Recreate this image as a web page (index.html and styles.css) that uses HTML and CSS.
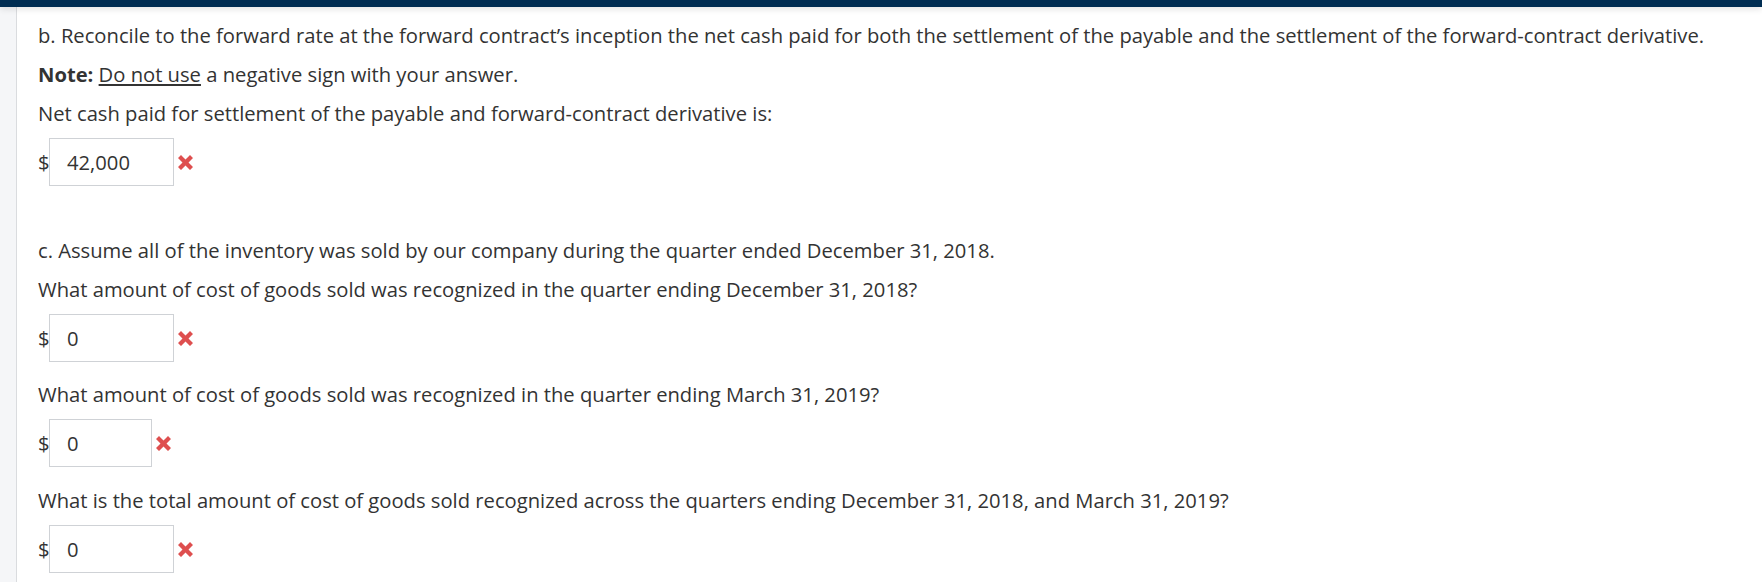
FILE: index.html
```html
<!DOCTYPE html>
<html>
<head>
<meta charset="utf-8">
<link rel="stylesheet" href="styles.css">
</head>
<body>
<div class="topbar"></div>
<div class="page">
  <div class="gutter"></div>
  <main class="content">
    <section class="part">
      <p class="q">b. Reconcile to the forward rate at the forward contract’s inception the net cash paid for both the settlement of the payable and the settlement of the forward-contract derivative.</p>
      <p class="q"><strong>Note:</strong> <u>Do not use</u> a negative sign with your answer.</p>
      <p class="q">Net cash paid for settlement of the payable and forward-contract derivative is:</p>
      <div class="answer">
        <span class="cur">$</span>
        <span class="box">42,000</span>
        <svg class="wrong" viewBox="0 0 16 16" width="15" height="15"><path d="M0 3.2 L3.2 0 L8 4.8 L12.8 0 L16 3.2 L11.2 8 L16 12.8 L12.8 16 L8 11.2 L3.2 16 L0 12.8 L4.8 8 Z"/></svg>
      </div>
    </section>
    <section class="part">
      <p class="q">c. Assume all of the inventory was sold by our company during the quarter ended December 31, 2018.</p>
      <p class="q">What amount of cost of goods sold was recognized in the quarter ending December 31, 2018?</p>
      <div class="answer">
        <span class="cur">$</span>
        <span class="box">0</span>
        <svg class="wrong" viewBox="0 0 16 16" width="15" height="15"><path d="M0 3.2 L3.2 0 L8 4.8 L12.8 0 L16 3.2 L11.2 8 L16 12.8 L12.8 16 L8 11.2 L3.2 16 L0 12.8 L4.8 8 Z"/></svg>
      </div>
      <p class="q after">What amount of cost of goods sold was recognized in the quarter ending March 31, 2019?</p>
      <div class="answer">
        <span class="cur">$</span>
        <span class="box narrow">0</span>
        <svg class="wrong" viewBox="0 0 16 16" width="15" height="15"><path d="M0 3.2 L3.2 0 L8 4.8 L12.8 0 L16 3.2 L11.2 8 L16 12.8 L12.8 16 L8 11.2 L3.2 16 L0 12.8 L4.8 8 Z"/></svg>
      </div>
      <p class="q after last">What is the total amount of cost of goods sold recognized across the quarters ending December 31, 2018, and March 31, 2019?</p>
      <div class="answer">
        <span class="cur">$</span>
        <span class="box">0</span>
        <svg class="wrong" viewBox="0 0 16 16" width="15" height="15"><path d="M0 3.2 L3.2 0 L8 4.8 L12.8 0 L16 3.2 L11.2 8 L16 12.8 L12.8 16 L8 11.2 L3.2 16 L0 12.8 L4.8 8 Z"/></svg>
      </div>
    </section>
  </main>
</div>
</body>
</html>
```
FILE: styles.css
```css
html, body {
  margin: 0;
  padding: 0;
  background: #fff;
  height: 100%;
}
body {
  font-family: "Open Sans", "Liberation Sans", sans-serif;
  font-size: 20.2px;
  color: #333;
  overflow: hidden;
}
.topbar {
  height: 7px;
  background: #002d52;
  box-shadow: 0 2px 6px rgba(0, 0, 0, 0.12);
  position: relative;
  z-index: 2;
}
.page {
  display: flex;
  min-height: calc(100% - 7px);
}
.gutter {
  width: 16px;
  flex: 0 0 16px;
  background: #f5f6f8;
  border-right: 1px solid #dadcdf;
}
.content {
  flex: 1;
  padding: 14px 0 0 21px;
}
.part {
  display: flex;
  flex-direction: column;
  align-items: flex-start;
}
.part + .part {
  margin-top: 50px;
}
.q {
  margin: 0;
  line-height: 28px;
}
.q + .q {
  margin-top: 11px;
}
.q.after {
  margin-top: 18px;
}
.q.after.last {
  margin-top: 19px;
}
.answer {
  display: flex;
  align-items: center;
  margin-top: 11px;
  height: 48px;
}
.cur {
  width: 11px;
  line-height: 28px;
}
.box {
  box-sizing: border-box;
  width: 125px;
  height: 48px;
  border: 1px solid #cfd2d6;
  padding-left: 17px;
  display: flex;
  align-items: center;
  color: #333;
}
.box.narrow {
  width: 103px;
}
.wrong {
  margin-left: 4px;
  fill: #de4f4f;
}
```
